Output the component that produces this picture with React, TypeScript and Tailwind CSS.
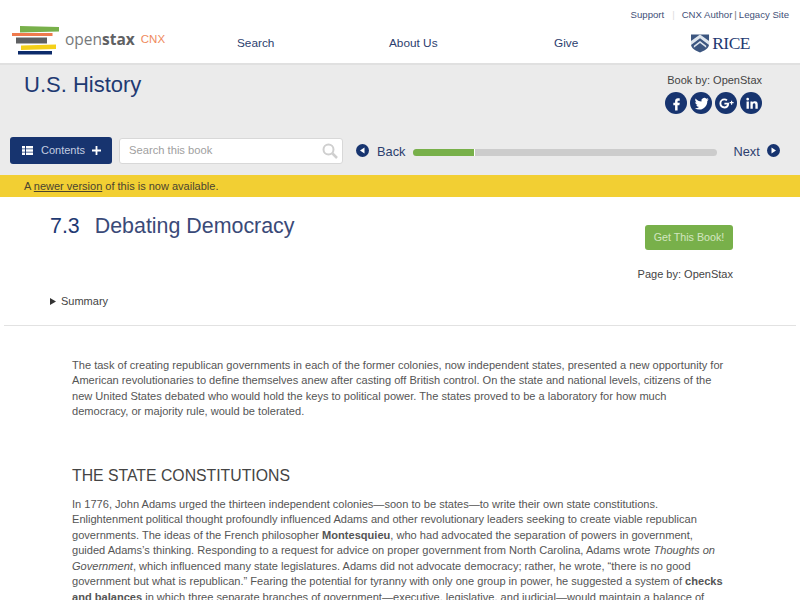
import React from "react";

function Logo() {
  return (
    <div className="flex items-center">
      <svg width="48" height="30" viewBox="0 0 48 30">
        <path d="M8 1 L47 2 L47 6.500 L8 7.500 Z" fill="#78b04a" />
        <path d="M0 8 H40.500 V11 H0 Z" fill="#ef7a4d" />
        <path d="M4 12.500 H35 V18.500 H4 Z" fill="#5e6062" />
        <path d="M9 20.500 L44 19.500 V24 L9 25 Z" fill="#f4d019" />
        <path d="M6 26 H40 V29.500 H6 Z" fill="#0c2b6b" />
      </svg>
      <span className="ml-[5px] text-[15.500px] text-[#77797b] font-['Open_Sans',sans-serif]">open<b className="text-[#5f6163]">stax</b></span>
      <span className="ml-[6px] text-[11.500px] text-[#ef8a5d]">CNX</span>
    </div>
  );
}

function Social({ d }: { d: string }) {
  return (
    <div className="w-[22px] h-[22px] rounded-full bg-[#17346f] flex items-center justify-center">
      <svg width="17" height="17" viewBox="0 0 24 24" fill="white"><path d={d} /></svg>
    </div>
  );
}

function Arrow({ left }: { left?: boolean }) {
  return (
    <div className="w-[13px] h-[13px] rounded-full bg-[#17346f] flex items-center justify-center">
      <svg width="7" height="7" viewBox="0 0 7 7" fill="white"><path d={left ? "M5.500 0.500 V6.500 L1 3.500 Z" : "M1.500 0.500 V6.500 L6 3.500 Z"} /></svg>
    </div>
  );
}

export default function App() {
  return (
    <div className="w-[800px] h-[600px] overflow-hidden bg-white text-[#555] font-['Liberation_Sans',Arial,sans-serif]">
      <header className="h-[63px] flex pl-[12px] pr-[11px]">
        <div className="pt-[25px] w-[225px] shrink-0"><Logo /></div>
        <nav className="w-[360px] shrink-0 flex pt-[35px] text-[11.800px] leading-[16px] text-[#2c3e6e]">
          <span className="w-[152px]">Search</span>
          <span className="w-[165px]">About Us</span>
          <span>Give</span>
        </nav>
        <div className="flex-1 flex flex-col items-end pt-[8px]">
          <div className="text-[9.600px] leading-[14px] text-[#3f5078] flex whitespace-nowrap">
            <span>Support</span>
            <span className="ml-[8px] mr-[7px] text-[#ddd]">|</span>
            <span>CNX Author</span>
            <span className="mx-[2px] text-[#777]">|</span>
            <span>Legacy Site</span>
          </div>
          <div className="mt-[10px] mr-[39px] flex items-center">
            <svg width="19" height="20" viewBox="0 0 20 20">
              <path d="M0 1 H19 V11 C19 16 14 18 9.500 20 C5 18 0 16 0 11 Z" fill="#3c5680" />
              <path d="M0 8 L9.500 1 L19 8 V12 L9.500 5 L0 12 Z" fill="#dfe6ee" />
              <path d="M3 13 L9.500 8 L16 13 V15 L9.500 10 L3 15 Z" fill="#dfe6ee" />
            </svg>
            <span className="ml-[2px] text-[17.500px] leading-[22px] text-[#1f3a72] font-['Liberation_Serif',serif] tracking-[-0.5px]">RICE</span>
          </div>
        </div>
      </header>
      <section className="h-[112px] bg-[#ebebeb] border-t-2 border-[#e0e0e0] flex flex-col">
        <div className="flex justify-between pl-[24px] pr-[38px] h-[72px]">
          <h1 className="text-[22px] leading-[30px] text-[#1f3a72] pt-[5px]">U.S. History</h1>
          <div className="pt-[8px] flex flex-col items-end">
            <div className="text-[11px] leading-[14px] text-[#444]">Book by: OpenStax</div>
            <div className="flex gap-[3px] mt-[5px]">
              <Social d="M14 8h2.500V4.500H14c-2.500 0-4 1.700-4 4V11H7.500v3.500H10V22h3.500v-7.500H16l.7-3.500h-3.200V8.700c0-.4.2-.7.5-.7z" />
              <Social d="M22 6c-.7.3-1.500.5-2.300.6.8-.5 1.500-1.300 1.800-2.200-.8.5-1.700.8-2.600 1A4 4 0 0 0 12 9.100C8.700 9 5.700 7.400 3.700 4.900c-1.100 1.900-.5 4.300 1.300 5.500-.7 0-1.300-.2-1.800-.5 0 2 1.400 3.700 3.300 4.100-.6.2-1.200.2-1.800.1.500 1.600 2 2.800 3.800 2.800A8.100 8.100 0 0 1 2.500 18.600 11.500 11.500 0 0 0 20.200 8.400c.7-.6 1.300-1.500 1.800-2.400z" />
              <Social d="M9 11v2.500h3.900c-.4 1.600-1.800 2.600-3.900 2.600a4.300 4.300 0 0 1 0-8.600c1.100 0 2 .4 2.700 1l1.800-1.800A6.900 6.900 0 0 0 9 5a7 7 0 0 0 0 14c4 0 6.700-2.800 6.700-6.800 0-.4 0-.8-.1-1.200H9zM20 10V8h-1.600v2h-2v1.600h2v2H20v-2h2V10h-2z" />
              <Social d="M5 9h3.300v10.500H5zM6.600 4a1.900 1.900 0 1 1 0 3.800 1.900 1.900 0 0 1 0-3.800zM10.500 9h3.100v1.400c.5-.9 1.600-1.700 3.200-1.700 3.400 0 4 2.200 4 5.100v5.700h-3.300v-5c0-1.200 0-2.800-1.700-2.800s-2 1.300-2 2.700v5.100h-3.300z" />
            </div>
          </div>
        </div>
        <div className="flex items-center pl-[10px] h-[27px]">
          <button className="w-[102px] h-[27px] rounded-[3px] bg-[#17346f] text-[#c3cde0] text-[11px] flex items-center pl-[12px]">
            <svg width="11" height="9" viewBox="0 0 11 9" fill="white"><path d="M0 0h3v2.500H0zM4 0h7v2.500H4zM0 3.250h3v2.500H0zM4 3.250h7v2.500H4zM0 6.500h3V9H0zM4 6.500h7V9H4z" /></svg>
            <span className="ml-[8px]">Contents</span>
            <svg className="ml-[7px]" width="9" height="9" viewBox="0 0 10 10" fill="white"><path d="M4 0h2v4h4v2H6v4H4V6H0V4h4z" /></svg>
          </button>
          <div className="ml-[7px] w-[224px] h-[26px] rounded-[3px] bg-white border border-[#d8d8d8] flex items-center justify-between pl-[9px] pr-[4px] text-[11.200px] text-[#a0a0a0]">
            <span>Search this book</span>
            <svg width="16" height="16" viewBox="0 0 16 16" fill="none" stroke="#cfcfcf" strokeWidth="2"><circle cx="6.500" cy="6.500" r="5" /><path d="M10.500 10.500L15 15" strokeWidth="2.500" /></svg>
          </div>
          <div className="ml-[13px]"><Arrow left /></div>
          <span className="ml-[8px] pt-[2px] text-[12.800px] text-[#2c3e6e]">Back</span>
          <div className="ml-[8px] mt-[3px] w-[304px] h-[7px] rounded-full bg-[#cccccc] overflow-hidden flex">
            <div className="w-[62px] h-full bg-[#78b04a] border-r border-white" />
          </div>
          <span className="ml-[16px] pt-[2px] text-[12.800px] text-[#2c3e6e]">Next</span>
          <div className="ml-[7px]"><Arrow /></div>
        </div>
      </section>
      <div className="bg-[#f2cf33] h-[22px] pl-[24px] text-[11px] leading-[22px] text-[#4a4430]">A <u>newer version</u> of this is now available.</div>
      <div className="relative h-[129px] border-b border-[#e2e2e2] mx-[4px]">
        <h2 className="absolute left-[46px] top-[15px] text-[21.400px] leading-[28px] text-[#3a4a78] whitespace-nowrap"><span className="text-[#1f3a72]">7.3</span><span className="ml-[15px]">Debating Democracy</span></h2>
        <div className="absolute right-[63px] top-[28px] w-[88px] h-[25px] rounded-[3px] bg-[#78b04a] text-[#d3e6c0] text-[10.700px] leading-[25px] text-center">Get This Book!</div>
        <div className="absolute right-[63px] top-[70px] text-[11px] leading-[14px] text-[#444]">Page by: OpenStax</div>
        <div className="absolute left-[46px] top-[97px] flex items-center text-[11px] leading-[14px] text-[#444]">
          <svg width="6" height="7" viewBox="0 0 6 7" fill="#333"><path d="M0 0 L6 3.500 L0 7 Z" /></svg>
          <span className="ml-[5px]">Summary</span>
        </div>
      </div>
      <article className="pl-[72px] pt-[32px] text-[11.070px] leading-[15.450px] whitespace-nowrap">
        <p>
          The task of creating republican governments in each of the former colonies, now independent states, presented a new opportunity for<br />
          American revolutionaries to define themselves anew after casting off British control. On the state and national levels, citizens of the<br />
          new United States debated who would hold the keys to political power. The states proved to be a laboratory for how much<br />
          democracy, or majority rule, would be tolerated.
        </p>
        <h3 className="mt-[46px] text-[15.800px] leading-[20px] text-[#444]">THE STATE CONSTITUTIONS</h3>
        <p className="mt-[11px]">
          In 1776, John Adams urged the thirteen independent colonies—soon to be states—to write their own state constitutions.<br />
          Enlightenment political thought profoundly influenced Adams and other revolutionary leaders seeking to create viable republican<br />
          governments. The ideas of the French philosopher <b>Montesquieu</b>, who had advocated the separation of powers in government,<br />
          guided Adams’s thinking. Responding to a request for advice on proper government from North Carolina, Adams wrote <i>Thoughts on</i><br />
          <i>Government</i>, which influenced many state legislatures. Adams did not advocate democracy; rather, he wrote, “there is no good<br />
          government but what is republican.” Fearing the potential for tyranny with only one group in power, he suggested a system of <b>checks</b><br />
          <b>and balances</b> in which three separate branches of government—executive, legislative, and judicial—would maintain a balance of
        </p>
      </article>
    </div>
  );
}
